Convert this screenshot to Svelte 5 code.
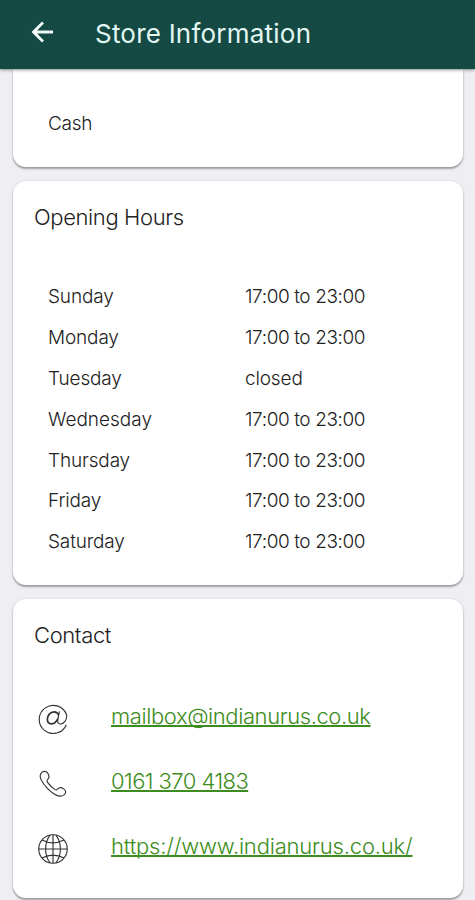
<script>
  const hours = [
    ['Sunday', '17:00 to 23:00'],
    ['Monday', '17:00 to 23:00'],
    ['Tuesday', 'closed'],
    ['Wednesday', '17:00 to 23:00'],
    ['Thursday', '17:00 to 23:00'],
    ['Friday', '17:00 to 23:00'],
    ['Saturday', '17:00 to 23:00'],
  ];
</script>

<div class="screen">
  <header>
    <svg class="back" width="24" height="24" viewBox="0 0 24 24" aria-hidden="true">
      <path d="M22 12H3M12 2.5L2.5 12L12 21.5" />
    </svg>
    <h1>Store Information</h1>
  </header>

  <main>
    <section class="card payment"><p>Cash</p></section>

    <section class="card opening">
      <h2>Opening Hours</h2>
      <dl>
        {#each hours as [day, time]}
          <div class="row"><dt class:wide={day === 'Wednesday'}>{day}</dt><dd class:time={time !== 'closed'}>{time}</dd></div>
        {/each}
      </dl>
    </section>

    <section class="card contact">
      <h2>Contact</h2>
      <ul>
        <li>
          <svg class="icon at" width="30" height="32" viewBox="0 0 32 32" aria-hidden="true">
            <path d="M30.2 23.2A15 15 0 1 1 30.6 13C31 19 27 22.4 24 22.4C21.4 22.4 20.6 20.5 21.2 17.5L22.8 9" />
            <path class="heavy" d="M22 12.8C21 10.4 19.4 9.4 17.2 9.4C13 9.4 10 13.4 10 17.4C10 20.4 11.6 22.2 14.2 22.2C17.4 22.2 20 19.6 21.2 16.5" />
          </svg>
          <a class="mail" href="mailto:mailbox@indianurus.co.uk">mailbox@indianurus.co.uk</a>
        </li>
        <li>
          <svg class="icon" width="30" height="32" viewBox="0 0 32 32" aria-hidden="true">
            <path d="M3.6 4.2C5.6 1.8 9.2 2 10.8 5C12 7.2 12.2 9.2 10.4 11C9.4 12 9.2 12.8 10 14C12.2 17.2 15 19.8 18.2 22C19.2 22.7 20 22.4 20.8 21.4C22.4 19.6 25 19.4 27.4 21.2C30.4 23.4 30 26 27.8 27.6C25 29.8 21.2 29.2 17.2 26.6C11.4 22.8 6.6 17.6 3.6 12C2 9 1.8 6.4 3.6 4.2Z" />
          </svg>
          <a class="phone" href="tel:01613704183">0161 370 4183</a>
        </li>
        <li>
          <svg class="icon" width="30" height="32" viewBox="0 0 32 32" aria-hidden="true">
            <circle cx="16" cy="16" r="15.2" />
            <path d="M.8 16H31.2M16 .8V31.2M4.2 6.4Q16 12.4 27.8 6.4M4.2 25.6Q16 19.6 27.8 25.6M13 1.2C6.5 9 6.5 23 13 30.8M19 1.2C25.5 9 25.5 23 19 30.8" />
          </svg>
          <a class="web" href="https://www.indianurus.co.uk/">https://www.indianurus.co.uk/</a>
        </li>
      </ul>
    </section>
  </main>
</div>

<style>
  .screen {
    height: 900px;
    overflow: hidden;
    display: flex;
    flex-direction: column;
    background: #efeef3;
    color: #222;
    font-family: Inter, "Liberation Sans", sans-serif;
    font-weight: 300;
  }
  h1, h2, p, dl, dd, ul { margin: 0; padding: 0; }
  header {
    flex: none;
    height: 69px;
    box-sizing: border-box;
    padding: 0 0 2px 31px;
    display: flex;
    align-items: center;
    background: #154944;
    box-shadow: 0 1px 3px rgba(0, 0, 0, .45);
    z-index: 1;
  }
  .back { fill: none; stroke: #f2fbf8; stroke-width: 2.8; margin-top: -3px; }
  h1 { margin-left: 40px; color: #e2f7f2; font-size: 26px; line-height: 34px; font-weight: 400; letter-spacing: .22px; white-space: nowrap; }
  main { display: flex; flex-direction: column; gap: 14px; padding: 0 12px 0 13px; }
  .card {
    box-sizing: border-box;
    background: #fff;
    border-radius: 13px;
    box-shadow: 0 2px 2px rgba(0, 0, 0, .32), 0 0 3px rgba(0, 0, 0, .1);
  }
  .payment { height: 98px; border-radius: 0 0 13px 13px; padding: 41px 35px 0; font-size: 19px; line-height: 28px; letter-spacing: -.3px; }
  .opening { height: 404px; padding-top: 20px; }
  .contact { height: 299px; padding-top: 20px; }
  h2 { margin-left: 21px; font-size: 22px; line-height: 32px; font-weight: 300; letter-spacing: -.38px; }
  dl { margin-top: 44px; }
  .row { display: grid; grid-template-columns: 197px 1fr; align-items: center; margin-left: 35px; height: 40.8px; font-size: 19px; line-height: 28px; letter-spacing: -.15px; }
  .wide { letter-spacing: 0; }
  .time { letter-spacing: -.4px; }
  ul { list-style: none; margin-top: 32px; }
  li { display: flex; align-items: center; height: 65px; padding-left: 25px; }
  .icon { flex: none; fill: none; stroke: #333; stroke-width: 1.2; margin-top: 6px; }
  .at { margin-top: 4px; }
  .heavy { stroke-width: 1.8; }
  a { margin-left: 43px; color: #3c8c20; font-size: 22px; line-height: 32px; white-space: nowrap; text-decoration: underline; text-decoration-thickness: 1.5px; text-underline-offset: 1px; text-decoration-skip-ink: none; }
  .mail { letter-spacing: -.41px; }
  .phone { letter-spacing: -.55px; }
  .web { letter-spacing: -.18px; }
</style>
